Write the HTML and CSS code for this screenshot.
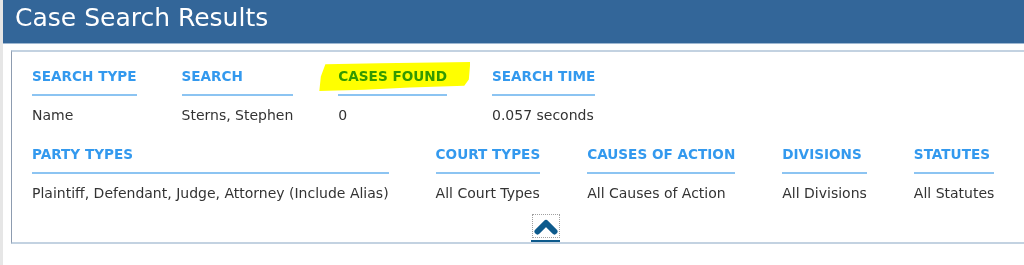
FILE: index.html
```html
<!DOCTYPE html>
<html lang="en">
  <head>
    <meta charset="UTF-8" />
    <meta name="viewport" content="width=device-width, initial-scale=1.0" />
    <title>Case Search Results</title>
    <link rel="stylesheet" href="styles.css">
  </head>
  <body>
    <h1 class="title">Case Search Results</h1>

    <div class="panel">
      <div class="row">
        <div class="field">
          <div class="field-label">SEARCH TYPE</div>
          <div class="field-value">Name</div>
        </div>
        <div class="field">
          <div class="field-label">SEARCH</div>
          <div class="field-value">Sterns, Stephen</div>
        </div>
        <div class="field">
          <span class="marker"></span>
          <div class="field-label">CASES FOUND</div>
          <div class="field-value">0</div>
        </div>
        <div class="field">
          <div class="field-label">SEARCH TIME</div>
          <div class="field-value">0.057 seconds</div>
        </div>
      </div>

      <div class="row row-filters">
        <div class="field">
          <div class="field-label">PARTY TYPES</div>
          <div class="field-value">Plaintiff, Defendant, Judge, Attorney (Include Alias)</div>
        </div>
        <div class="field">
          <div class="field-label">COURT TYPES</div>
          <div class="field-value">All Court Types</div>
        </div>
        <div class="field">
          <div class="field-label">CAUSES OF ACTION</div>
          <div class="field-value">All Causes of Action</div>
        </div>
        <div class="field">
          <div class="field-label">DIVISIONS</div>
          <div class="field-value">All Divisions</div>
        </div>
        <div class="field">
          <div class="field-label">STATUTES</div>
          <div class="field-value">All Statutes</div>
        </div>
      </div>

      <div class="toggle">
        <button class="toggle-btn" aria-label="Collapse">
          <svg width="24" height="17" viewBox="0 0 24 17">
            <polyline points="3.5,13.5 12,5 20.5,13.5" fill="none" stroke="#0d5a8c" stroke-width="6" stroke-linecap="round" stroke-linejoin="round" />
          </svg>
        </button>
        <div class="toggle-bar"></div>
      </div>
    </div>
  </body>
</html>
```

FILE: styles.css
```css
html,
body {
  margin: 0;
  padding: 0;
}

body {
  font-family: "DejaVu Sans", sans-serif;
  color: #333;
  background-color: #ffffff;
  height: 265px;
  border-left: 3px solid #e6e6e6;
  overflow: hidden;
}

.title {
  margin: 0;
  height: 43px;
  line-height: 36px;
  padding-left: 12px;
  font-size: 25px;
  font-weight: normal;
  color: #ffffff;
  background-color: #336699;
  border-bottom: 1px solid #9fb8d2;
}

.panel {
  margin: 6px 0 0 8px;
  padding: 15px 0 0 20px;
  border-top: 2px solid #c3d2e1;
  border-left: 1px solid #8d9cb0;
  border-bottom: 2px solid #c3d2e1;
}

.row {
  display: flex;
  gap: 45px;
  margin-bottom: 21px;
}

.row-filters {
  gap: 47px;
}

.field {
  position: relative;
}

.field-label {
  font-size: 13.6px;
  line-height: 18px;
  font-weight: bold;
  color: #3399ee;
  padding-bottom: 9px;
  border-bottom: 2px solid #8cc4f2;
  white-space: nowrap;
}

.field-value {
  font-size: 14px;
  line-height: 18px;
  margin-top: 10px;
  white-space: nowrap;
}

/* hand-drawn highlighter stroke over "cases found" */
.marker {
  position: absolute;
  left: -19px;
  top: -5px;
  width: 151px;
  height: 29px;
  background-color: #ffff00;
  clip-path: polygon(4% 8%, 40% 4%, 100% 0, 99% 60%, 96% 82%, 60% 88%, 30% 96%, 0 100%, 1% 50%);
  mix-blend-mode: multiply;
  z-index: 1;
}

.toggle {
  display: flex;
  flex-direction: column;
  align-items: flex-start;
  padding: 12px 0 0 499px;
  margin-top: -21px;
}

.toggle-btn {
  display: flex;
  justify-content: center;
  align-items: flex-start;
  width: 28px;
  height: 24px;
  padding: 3px 0 0;
  margin: 0 0 0 1px;
  background: none;
  border: 1px dotted #a0a0a0;
  cursor: pointer;
}

.toggle-btn svg {
  display: block;
}

.toggle-bar {
  width: 29px;
  height: 2px;
  margin-top: 2px;
  background-color: #0d5a8c;
}
```
